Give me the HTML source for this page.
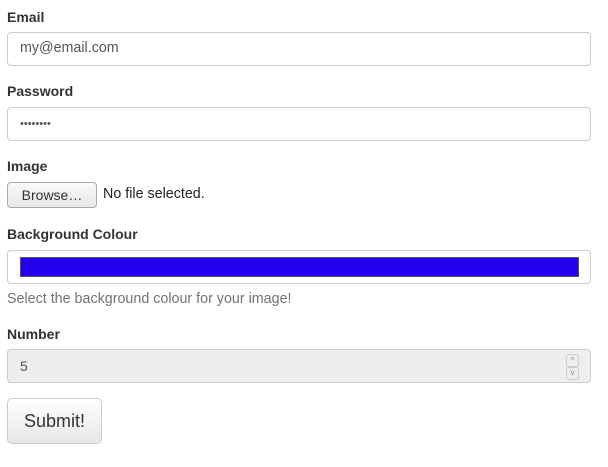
<!DOCTYPE html>
<html><head><style>
body{margin:0;background:#fff;font-family:"Liberation Sans",sans-serif;color:#333;font-size:14px}
.a{position:absolute}
.l{font-weight:bold;font-size:14px;left:7px}
.in{left:7px;width:582px;height:32px;border:1px solid #ccc;border-radius:4px;background:#fff;box-sizing:content-box}
.t{left:20px;font-size:14px;color:#555}
</style></head><body>
<div class="a l" style="top:9px">Email</div>
<div class="a in" style="top:32px"></div>
<div class="a t" style="top:40px;font-size:14.3px">my@email.com</div>
<div class="a l" style="top:83px">Password</div>
<div class="a in" style="top:107px"></div>
<div class="a t" style="top:118px;letter-spacing:0;font-size:11px">••••••••</div>
<div class="a l" style="top:158px">Image</div>
<div class="a" style="left:7px;top:182px;width:88px;height:24px;border:1px solid #aaa;border-radius:4px;background:linear-gradient(#fafafa,#e6e6e6);text-align:center;line-height:24px;color:#333">Browse…</div>
<div class="a" style="left:103px;top:186px;color:#222;font-size:14.3px">No file selected.</div>
<div class="a l" style="top:226px">Background Colour</div>
<div class="a in" style="top:250px"></div>
<div class="a" style="left:20px;top:257px;width:557px;height:18px;background:#2200ee;border:1px solid #555"></div>
<div class="a" style="left:7px;top:291px;color:#737373;font-size:14.3px">Select the background colour for your image!</div>
<div class="a l" style="top:326px">Number</div>
<div class="a in" style="top:349px;background:#eee"></div>
<div class="a t" style="top:358px">5</div>
<div class="a" style="left:566px;top:354px;width:11px;height:11px;border:1px solid #ccc;border-radius:3px;font-size:8px;line-height:11px;text-align:center;color:#888">^</div>
<div class="a" style="left:566px;top:367px;width:11px;height:11px;border:1px solid #ccc;border-radius:3px;font-size:8px;line-height:9px;text-align:center;color:#888">v</div>
<div class="a" style="left:7px;top:398px;width:93px;height:44px;border:1px solid #ccc;border-radius:5px;background:linear-gradient(#fff,#e6e6e6);text-align:center;line-height:44px;font-size:18px;color:#333">Submit!</div>
</body></html>
